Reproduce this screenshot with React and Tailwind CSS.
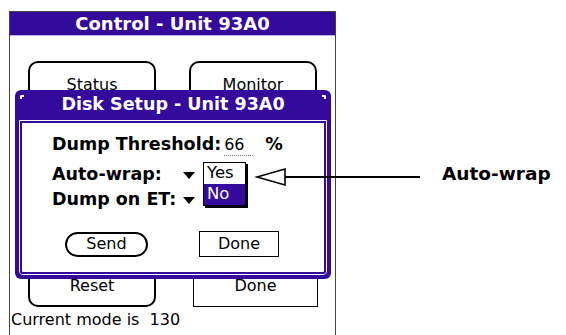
import React from "react";

function Tri() {
  return (
    <svg width="12" height="7" viewBox="0 0 12 7" className="block">
      <polygon points="0,0 12,0 6,7" fill="#000" />
    </svg>
  );
}

export default function App() {
  return (
    <div
      className="relative w-[566px] h-[335px] bg-white overflow-hidden"
      style={{ fontFamily: '"DejaVu Sans", Verdana, sans-serif' }}
    >
      {/* Palm screen */}
      <div className="ml-[9px] mt-[11px] w-[327px] h-[330px] border-l border-r border-t border-[#444] flex flex-col text-black">
        <div className="h-[24px] bg-[#340a9c] border-b border-[#b9b2e2] flex items-center justify-center text-white font-bold text-[18px] leading-none">
          Control - Unit 93A0
        </div>
        <div className="flex ml-[18px] mt-[25px] gap-[33px]">
          <div className="w-[128px] h-[46px] border-2 border-black rounded-[10px] flex justify-center pt-[14px] text-[16px] leading-none">
            Status
          </div>
          <div className="w-[128px] h-[46px] border-2 border-black rounded-[10px] flex justify-center pt-[14px] text-[16px] leading-none">
            Monitor
          </div>
        </div>
        <div className="flex ml-[18px] mt-[158px] gap-[37px]">
          <div className="w-[128px] h-[42px] border-2 border-black rounded-[10px] flex items-center justify-center text-[16px] leading-none">
            Reset
          </div>
          <div className="w-[125px] h-[42px] border border-black flex items-center justify-center text-[16px] leading-none">
            Done
          </div>
        </div>
        <div className="mt-[3px] ml-[1px] text-[16px] leading-[20px]">Current mode is&nbsp; 130</div>
      </div>

      {/* Dialog */}
      <div className="absolute left-[15px] top-[90px] w-[316px] h-[189px] bg-[#340a9c] rounded-[6px] flex flex-col px-[4px] pb-[4px]">
        <div className="absolute left-[5px] top-[5px] w-[4px] h-[4px] border-l-2 border-t-2 border-white rounded-tl-[2px]" />
        <div className="absolute right-[5px] top-[5px] w-[4px] h-[4px] border-r-2 border-t-2 border-white rounded-tr-[2px]" />
        <div className="h-[30px] flex items-center justify-center text-white font-bold text-[17.5px] leading-none">
          Disk Setup - Unit 93A0
        </div>
        <div className="flex-1 border border-white rounded-b-[4px]">
          <div className="h-full border-2 border-[#340a9c] rounded-b-[3px] bg-white relative flex flex-col">
            <div className="flex items-center h-[24px] mt-[10px] ml-[30px] text-[17.5px] leading-none">
              <span className="font-bold">Dump Threshold:</span>
              <span className="ml-[3px] w-[29px] border-b border-dotted border-[#777] leading-[20px] text-[16px]">66</span>
              <span className="ml-[12px] font-bold">%</span>
            </div>
            <div className="flex items-center h-[24px] mt-[6px] ml-[30px] text-[17.5px] leading-none font-bold">
              <span className="w-[131px]">Auto-wrap:</span>
              <Tri />
            </div>
            <div className="flex items-center h-[24px] mt-[1px] ml-[30px] text-[17.5px] leading-none font-bold">
              <span className="w-[131px]">Dump on ET:</span>
              <Tri />
            </div>
            <div className="flex items-center mt-[19px] ml-[43px]">
              <div className="w-[83px] h-[25px] border-2 border-black rounded-full flex items-center justify-center text-[16px] leading-none">
                Send
              </div>
              <div className="ml-[51px] w-[80px] h-[26px] border border-black flex items-center justify-center text-[16px] leading-none">
                Done
              </div>
            </div>
            {/* popup list */}
            <div className="absolute left-[181px] top-[39px] w-[43px] h-[44px] border border-black shadow-[2px_2px_0_0_#000] flex flex-col text-[16.5px] leading-none">
              <div className="h-[21px] bg-white flex items-center pl-[3px]">Yes</div>
              <div className="flex-1 bg-[#340a9c] text-white flex items-center pl-[3px]">No</div>
            </div>
          </div>
        </div>
      </div>

      {/* Annotation arrow */}
      <svg className="absolute left-0 top-0" width="566" height="335" viewBox="0 0 566 335">
        <line x1="284" y1="177" x2="420" y2="177" stroke="#000" strokeWidth="2.2" />
        <polygon points="257,177 285,169 285,185" fill="#fff" stroke="#000" strokeWidth="1.6" strokeLinejoin="miter" />
      </svg>
      <div className="absolute left-[442px] top-[163px] text-[18.5px] leading-[22px] font-bold text-black">
        Auto-wrap
      </div>
    </div>
  );
}
